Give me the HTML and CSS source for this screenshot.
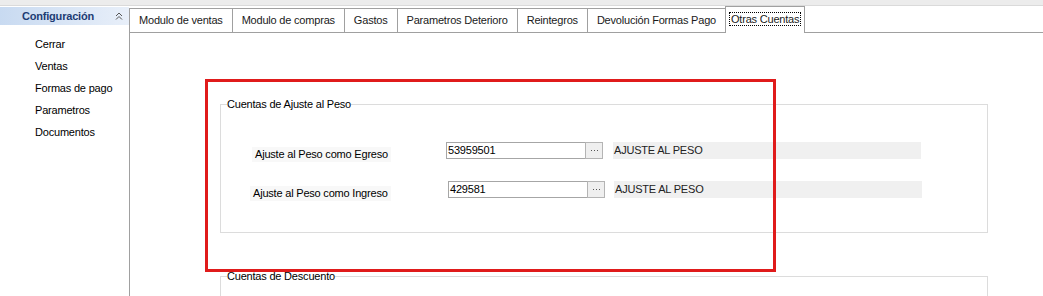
FILE: index.html
```html
<!DOCTYPE html>
<html lang="es">
<head>
     <meta charset="UTF-8">
     <title>Configuración - Otras Cuentas</title>
     <link rel="stylesheet" href="styles.css">
</head>
<body>
     <div class="topbar"></div>
     <div class="app">
          <aside class="sidebar">
               <div class="side-head">
                    <span>Configuración</span>
                    <svg width="8" height="8" viewBox="0 0 8 8"><polyline points="1,4 4,1 7,4" fill="none" stroke="#555" stroke-width="1"/><polyline points="1,7.5 4,4.5 7,7.5" fill="none" stroke="#555" stroke-width="1"/></svg>
               </div>
               <ul class="side-list">
                    <li>Cerrar</li>
                    <li>Ventas</li>
                    <li>Formas de pago</li>
                    <li>Parametros</li>
                    <li>Documentos</li>
               </ul>
          </aside>
          <section class="workspace">
               <div class="tabs">
                    <div class="tab">Modulo de ventas</div>
                    <div class="tab">Modulo de compras</div>
                    <div class="tab">Gastos</div>
                    <div class="tab">Parametros Deterioro</div>
                    <div class="tab">Reintegros</div>
                    <div class="tab">Devolución Formas Pago</div>
                    <div class="tab active"><span>Otras Cuentas</span></div>
               </div>
               <div class="panel">
                    <fieldset class="group group-peso">
                         <legend>Cuentas de Ajuste al Peso</legend>
                         <div class="row">
                              <div class="field-label"><span>Ajuste al Peso como Egreso</span></div>
                              <div class="field-input">53959501</div>
                              <div class="dots-btn"><svg width="7" height="1" viewBox="0 0 7 1"><rect x="0" width="1" height="1" fill="#555"/><rect x="3" width="1" height="1" fill="#555"/><rect x="6" width="1" height="1" fill="#555"/></svg></div>
                              <div class="field-desc">AJUSTE AL PESO</div>
                         </div>
                         <div class="row row-shift">
                              <div class="field-label"><span>Ajuste al Peso como Ingreso</span></div>
                              <div class="field-input">429581</div>
                              <div class="dots-btn"><svg width="7" height="1" viewBox="0 0 7 1"><rect x="0" width="1" height="1" fill="#555"/><rect x="3" width="1" height="1" fill="#555"/><rect x="6" width="1" height="1" fill="#555"/></svg></div>
                              <div class="field-desc">AJUSTE AL PESO</div>
                         </div>
                    </fieldset>
                    <fieldset class="group group-desc">
                         <legend>Cuentas de Descuento</legend>
                    </fieldset>
                    <div class="highlight"></div>
               </div>
          </section>
     </div>
</body>
</html>
```

FILE: styles.css
```css
*{
     padding:0;
     margin:0;
     box-sizing: border-box;
}
html,body{
     width:100%;
     height:100%;
     overflow:hidden;
}
body{
     font-family: 'Liberation Sans', Arial, sans-serif;
     font-size: 11px;
     letter-spacing: -0.2px;
     color: #000;
     background: #fff;
}

.topbar{
     height: 6px;
     background: #ececec;
     border-bottom: 1px solid #dadada;
}
.app{
     display: flex;
     height: calc(100% - 6px);
}

/* menu lateral */
.sidebar{
     width: 129px;
     flex-shrink: 0;
}
.side-head{
     margin-top: 1px;
     height: 18px;
     display: flex;
     align-items: center;
     justify-content: space-between;
     padding: 0 6px 0 22px;
     background: linear-gradient(to right, #c8daf1, #e8eff9);
}
.side-head span{
     font-weight: bold;
     color: #1d3c74;
}
.side-list{
     list-style: none;
     padding: 8px 0 0 35px;
}
.side-list li{
     line-height: 22px;
}

/* pestañas */
.workspace{
     flex: 1;
     display: flex;
     flex-direction: column;
}
.tabs{
     display: flex;
     align-items: flex-end;
     height: 27px;
     border-bottom: 1px solid #a0a0a0;
}
.tab{
     height: 24px;
     line-height: 22px;
     padding: 0 9px;
     border: 1px solid #a0a0a0;
     border-bottom: none;
     margin-left: -1px;
     background: #fff;
     color: #1a1a1a;
     white-space: nowrap;
}
.tab:first-child{margin-left: 0;}
.tab.active{
     height: 27px;
     margin-bottom: -1px;
     padding: 0 4px;
     line-height: 24px;
     position: relative;
}
.tab.active span{
     outline: 1px dotted #000;
     outline-offset: 0;
     padding: 0 1px;
}

/* panel */
.panel{
     flex: 1;
     position: relative;
     border-left: 1px solid #a0a0a0;
     padding: 65px 0 0 90px;
}
.group{
     width: 768px;
     border: 1px solid #dcdcdc;
     min-width: 0;
}
.group legend{
     margin-left: 6px;
     padding: 0;
     line-height: 13px;
}
.group-peso{
     padding: 31px 0 34px 0;
}
.group-desc{
     margin-top: 37px;
     height: 120px;
}

.row{
     display: flex;
     height: 17px;
     align-items: flex-start;
}
.row + .row{margin-top: 22px;}
.field-label{
     width: 225px;
     padding: 5px 0 0 31px;
}
.field-label span{
     display: inline-block;
     padding: 0 3px;
     line-height: 15px;
     background: #f8f8f8;
}
.field-input{
     width: 140px;
     height: 17px;
     line-height: 15px;
     padding-left: 1px;
     border: 1px solid #a6a6a6;
}
.dots-btn{
     width: 18px;
     height: 17px;
     margin-left: -1px;
     display: flex;
     align-items: center;
     justify-content: center;
     background: #efefef;
     border: 1px solid #b4b4b4;
}
.field-desc{
     width: 308px;
     height: 17px;
     line-height: 17px;
     margin-left: 10px;
     padding-left: 1px;
     background: #f0f0f0;
     color: #222;
}
.row-shift .field-label{
     width: 227px;
     padding-left: 29px;
}
.row-shift .field-desc{margin-left: 9px;}

.highlight{
     position: absolute;
     left: 75px;
     top: 46px;
     width: 571px;
     height: 193px;
     border: 3px solid #e01b1b;
}
```
